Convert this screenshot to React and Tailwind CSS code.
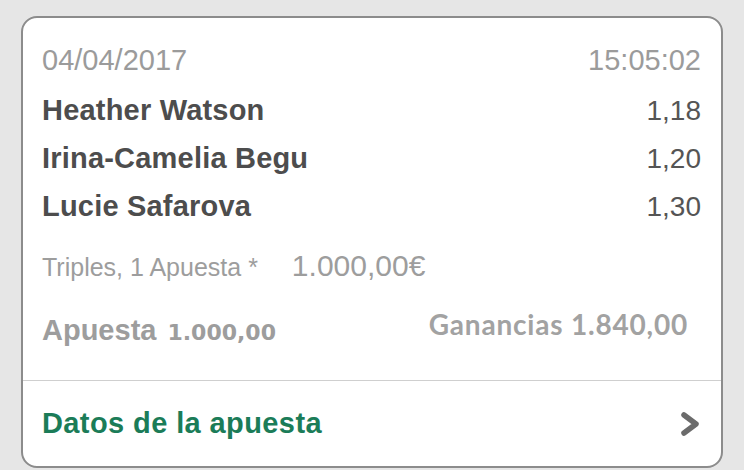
import React from "react";

const picks = [
  { name: "Heather Watson", odds: "1,18" },
  { name: "Irina-Camelia Begu", odds: "1,20" },
  { name: "Lucie Safarova", odds: "1,30" },
];

const Chevron = () => (
  <svg width="24" height="28" viewBox="0 0 24 28" fill="none">
    <polyline
      points="5,5 17,14 5,23"
      stroke="#6b6b6b"
      strokeWidth="5.5"
      strokeLinecap="round"
      strokeLinejoin="round"
    />
  </svg>
);

export default function App() {
  return (
    <div className="w-[744px] h-[470px] bg-[#e6e6e6] pt-[16px] px-[21px] font-['Liberation_Sans',Arial,sans-serif]">
      <div className="h-[452px] bg-white border-2 border-[#8c8c8c] rounded-[16px] flex flex-col overflow-hidden">
        {/* bet summary */}
        <div className="flex-1 pl-[19px] pr-[20px] pt-[25px]">
          <div className="flex justify-between text-[29px] leading-[34px] text-[#9b9b9b]">
            <span>04/04/2017</span>
            <span>15:05:02</span>
          </div>

          <div className="mt-[9px]">
            {picks.map((p) => (
              <div key={p.name} className="flex justify-between items-baseline h-[48px] leading-[48px]">
                <span className="text-[29px] font-bold text-[#4d4d4d] tracking-[0.2px]">{p.name}</span>
                <span className="text-[28px] text-[#555555]">{p.odds}</span>
              </div>
            ))}
          </div>

          <div className="mt-[19px] flex items-baseline leading-[34px] text-[#9d9d9d]">
            <span className="text-[25px]">Triples, 1 Apuesta *</span>
            <span className="text-[30px] ml-[34px]">1.000,00€</span>
          </div>

          <div className="mt-[29px] flex justify-between items-start">
            <div className="flex items-baseline leading-[34px] text-[#9d9d9d]">
              <span className="text-[29px] font-bold">Apuesta</span>
              <span className="ml-[11px] text-[22px] font-bold font-['DejaVu_Sans',sans-serif]">1.000,00</span>
            </div>
            <div className="mr-[13px] text-[28px] leading-[22px] font-bold text-[#a2a2a2] font-['Lato',sans-serif] tracking-[0.8px]">
              Ganancias 1.840,00
            </div>
          </div>
        </div>

        {/* footer link */}
        <div className="h-[86px] border-t border-[#cfcfcf] flex items-center justify-between pl-[19px] pr-[18px]">
          <span className="text-[29px] font-bold text-[#1b7c58] tracking-[0.4px]">Datos de la apuesta</span>
          <Chevron />
        </div>
      </div>
    </div>
  );
}
